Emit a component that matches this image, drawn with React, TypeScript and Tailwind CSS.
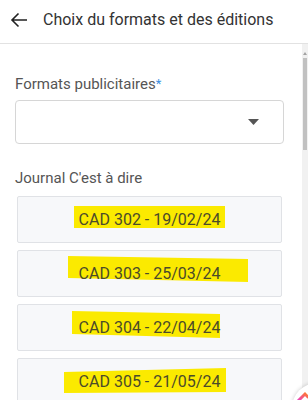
import React from "react";

const cards = [
  { label: "CAD 302 - 19/02/24", poly: "56,9 207,9 207,31 56,31" },
  { label: "CAD 303 - 25/03/24", poly: "50,5 230,8 230,31 50,27" },
  { label: "CAD 304 - 22/04/24", poly: "54,6 202,9 202,33 54,29" },
  { label: "CAD 305 - 21/05/24", poly: "46,13 208,9 208,33 46,34" },
];

export default function App() {
  return (
    <div
      className="relative w-[308px] h-[400px] overflow-hidden bg-white"
      style={{ fontFamily: "Roboto, 'Liberation Sans', sans-serif" }}
    >
      <div className="h-[44px] flex items-center pb-[4px] border-b border-[#e2e2e2]">
        <svg width="18" height="16" viewBox="0 0 18 16" className="ml-[10px]">
          <path d="M17 8H2M8.5 1.5L2 8l6.5 6.5" fill="none" stroke="#222" strokeWidth="1.6" />
        </svg>
        <span className="ml-[15px] text-[16px] text-[#333] leading-none">
          Choix du formats et des éditions
        </span>
      </div>
      <div className="flex h-[356px]">
        <div className="flex-1 pl-[15px] pr-[18px] pt-[30px]">
          <div className="text-[15px] leading-[20px] text-[#555]">
            Formats publicitaires<span className="text-[#3b8fe0] text-[13px] align-top">*</span>
          </div>
          <div className="mt-[6px] h-[44px] border border-[#d6d6d6] rounded-[4px] flex items-center justify-end pr-[24px]">
            <svg width="11" height="6" viewBox="0 0 11 6">
              <path d="M0 0h11L5.5 6z" fill="#555" />
            </svg>
          </div>
          <div className="mt-[24px] text-[15px] leading-[20px] text-[#555]">
            Journal C'est à dire
          </div>
          <div className="mt-[8px] ml-[2px] mr-[2px] flex flex-col gap-[7px]">
            {cards.map((c) => (
              <div
                key={c.label}
                className="relative h-[47px] border border-[#e0e2e6] rounded-[2px] bg-[#f7f8fa] flex items-center justify-center"
              >
                <svg className="absolute left-0 top-0" width="263" height="45">
                  <polygon points={c.poly} fill="#fbea00" />
                </svg>
                <span className="relative text-[16px] text-[#4b4b2a]">{c.label}</span>
              </div>
            ))}
          </div>
        </div>
        <div className="w-[6px] bg-[#f1f1f1] flex flex-col items-center">
          <div className="mt-[8px] w-0 h-0 border-l-[2px] border-r-[2px] border-b-[3px] border-l-transparent border-r-transparent border-b-[#a3a3a3]" />
          <div className="mt-[3px] w-[4px] h-[92px] bg-[#c1c1c1]" />
        </div>
      </div>
      <div className="absolute left-[292px] top-[383px] w-[50px] h-[50px] rounded-full bg-white shadow-[0_0_4px_rgba(0,0,0,0.2)]">
        <svg width="20" height="20" viewBox="0 0 20 20" className="absolute left-[4px] top-[6px]">
          <defs>
            <linearGradient id="g" x1="0" y1="1" x2="1" y2="0">
              <stop offset="0" stopColor="#e83ec8" />
              <stop offset="1" stopColor="#ff7a2e" />
            </linearGradient>
          </defs>
          <path d="M2 12L9 5l3 3" fill="none" stroke="url(#g)" strokeWidth="3" strokeLinecap="round" />
        </svg>
      </div>
    </div>
  );
}
